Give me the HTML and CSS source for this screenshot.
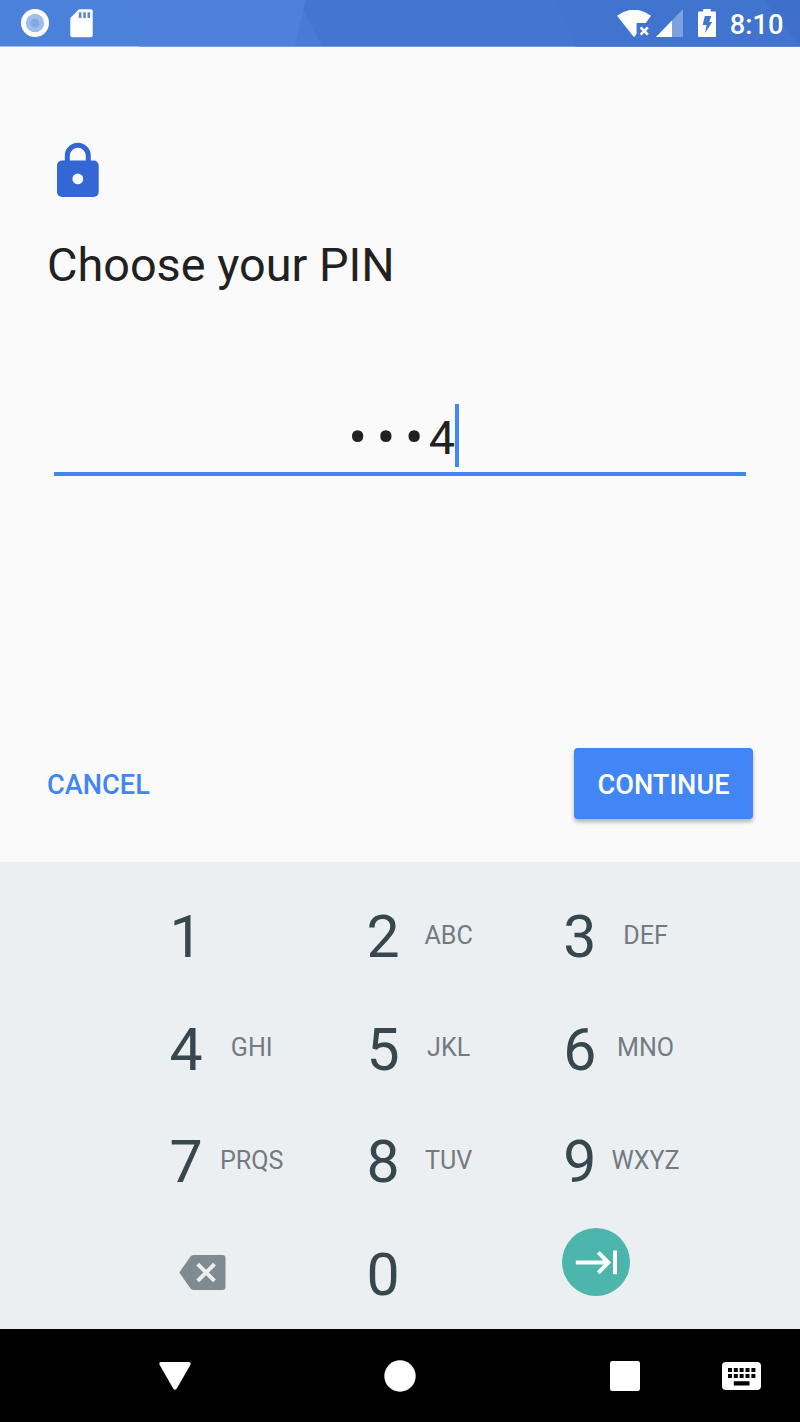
FILE: index.html
```html
<!DOCTYPE html>
<html lang="en">
<head>
<meta charset="utf-8">
<title>Choose your PIN</title>
<link rel="stylesheet" href="styles.css">
</head>
<body>
<div class="screen">
  <header class="status">
    <svg class="status-bg" viewBox="0 0 800 47" preserveAspectRatio="none" aria-hidden="true">
      <path fill="#4b80db" d="M0 0H800V47H0z"/>
      <path fill="#4d81dc" d="M124 0H306L295 47H139z"/>
      <path fill="#4276d0" d="M306 0H800V47H322L303 10z"/>
      <path fill="#487bd6" d="M303 10L322 47H295z"/>
      <path fill="#4074cf" d="M555 0H765L800 47H576z"/>
      <path fill="#3d70ca" d="M765 0H800V47z"/>
    </svg>
    <div class="status-left">
      <svg width="28" height="28" viewBox="0 0 28 28"><circle cx="14" cy="14" r="14" fill="#fff"/><circle cx="14" cy="14" r="9.2" fill="#a0bdec"/><circle cx="14" cy="14" r="4.6" fill="#83a8e4"/></svg>
      <svg width="23" height="29" viewBox="0 0 23 29"><path fill="#fff" d="M9 .3H20.700Q22.700.3 22.700 2.300V26.300Q22.700 28.300 20.700 28.300H2.300Q.3 28.300.3 26.300V9z"/><path fill="#5f87ce" d="M8.800 3.300h2.600v5.600H8.800zM13.200 3.300h2.600v5.600h-2.600zM17.500 3.300h2.600v5.600h-2.600z"/></svg>
    </div>
    <div class="status-right">
      <svg class="wifi" width="34" height="29" viewBox="0 0 34 29"><path fill="#fff" d="M0 5.800Q17-6.600 34 5.800L28.800 12.900H19.600V24L17 27.300z"/><path fill="none" stroke="#fff" stroke-width="2.600" d="M23.600 17.300l7.300 7.400M30.900 17.300l-7.300 7.400"/></svg>
      <svg class="signal" width="27" height="28" viewBox="0 0 27 28"><path fill="#7da1df" d="M27 0V28H0z"/><path fill="#fff" d="M16 11.600V28H0z"/></svg>
      <svg class="battery" width="18" height="29" viewBox="0 0 18 29"><path fill="#fff" d="M5.300 0h7.400v2.500H17q1 0 1 1v23.500q0 1-1 1H1q-1 0-1-1V3.500q0-1 1-1h4.300z"/><path fill="#4276d0" d="M6.800 7h6.500l-2.100 6h3L6.900 24.300l1.700-8.200H4.700z"/></svg>
      <span class="clock">8:10</span>
    </div>
  </header>

  <main class="setup">
    <svg class="lock" width="42" height="55" viewBox="0 0 42 55"><rect y="18.500" width="41.700" height="36.500" rx="5" fill="#3367d6"/><path d="M10.300 19.500V13.800a10.500 10.500 0 0 1 21 0V19.500" fill="none" stroke="#3367d6" stroke-width="5"/><circle cx="20.800" cy="36.900" r="5.400" fill="#fafafa"/></svg>
    <h1 class="title">Choose your PIN</h1>
    <div class="pin-field">
      <span class="dot">•</span><span class="dot">•</span><span class="dot">•</span><span class="digit-shown">4</span><span class="caret"></span>
    </div>
    <div class="actions">
      <button class="cancel">CANCEL</button>
      <button class="continue">CONTINUE</button>
    </div>
  </main>

  <section class="keypad">
    <div class="key"><b>1</b></div>
    <div class="key"><b>2</b><span>ABC</span></div>
    <div class="key"><b>3</b><span>DEF</span></div>
    <div class="key"><b>4</b><span>GHI</span></div>
    <div class="key"><b>5</b><span>JKL</span></div>
    <div class="key"><b>6</b><span>MNO</span></div>
    <div class="key"><b>7</b><span>PRQS</span></div>
    <div class="key"><b>8</b><span>TUV</span></div>
    <div class="key"><b>9</b><span>WXYZ</span></div>
    <div class="key key-delete"><svg width="47" height="35" viewBox="0 0 47 35"><path fill="#808b91" d="M14.500 0H43.500Q46.500 0 46.500 3V32Q46.500 35 43.500 35H14.500Q12.500 35 11.300 33.200L.3 17.500 11.300 1.800Q12.500 0 14.500 0z"/><path fill="none" stroke="#eceff1" stroke-width="3.900" d="M18.700 9.100l16.800 16.800M35.500 9.100L18.700 25.900"/></svg></div>
    <div class="key"><b>0</b></div>
    <div class="key key-next"><svg width="68" height="68" viewBox="0 0 68 68"><circle cx="34" cy="34" r="34" fill="#4db6ac"/><path fill="none" stroke="#fff" stroke-width="4" d="M13.800 34.500H46.500M36.300 24.300L46.300 34.500 36.300 44.800M53 22.500V46.300"/></svg></div>
  </section>

  <nav class="navbar">
    <svg class="nav-back" width="32" height="28" viewBox="0 0 32 28"><path fill="#fff" d="M2 0H30Q32.500.5 31.300 3L17.800 26.600Q16 29 14.200 26.600L.7 3Q-.5.5 2 0z"/></svg>
    <svg class="nav-home" width="32" height="32" viewBox="0 0 32 32"><circle cx="16" cy="16" r="15.700" fill="#fff"/></svg>
    <svg class="nav-recent" width="30" height="30" viewBox="0 0 30 30"><rect width="30" height="30" rx="2.300" fill="#fff"/></svg>
    <svg class="nav-keys" width="39" height="28" viewBox="0 0 39 28"><rect width="39" height="28" rx="4" fill="#fff"/><path fill="#000" d="M6 6h4v4H6zM11.800 6h4v4h-4zM17.600 6h4v4h-4zM23.500 6h4v4h-4zM29.400 6h4v4h-4zM6 12h4v4H6zM11.800 12h4v4h-4zM17.600 12h4v4h-4zM23.500 12h4v4h-4zM29.400 12h4v4h-4zM11.800 19.300h15.700v4.200H11.800z"/></svg>
  </nav>
</div>
</body>
</html>
```
FILE: styles.css
```css
* { box-sizing: border-box; }
body { margin: 0; font-family: Roboto, sans-serif; background: #fafafa; }
svg { display: block; flex: none; }
.screen { width: 800px; height: 1422px; display: flex; flex-direction: column; overflow: hidden; }

.status { position: relative; height: 46.5px; flex: none; display: flex; justify-content: space-between; }
.status-bg { position: absolute; inset: 0; width: 100%; height: 100%; }
.status-left, .status-right { position: relative; display: flex; align-items: flex-start; }
.status-left { padding: 9px 0 0 21px; gap: 21px; }
.status-right { padding: 9px 16.500px 0 0; }
.wifi { margin-right: 5px; margin-top: 1px; }
.signal { margin-right: 15px; }
.battery { margin-right: 14px; }
.clock { color: #fff; font-size: 27.3px; font-weight: 500; line-height: 32px; }

.setup { height: 815.5px; flex: none; display: flex; flex-direction: column; padding: 95.500px 47px 0; background: #fafafa; }
.lock { margin-left: 10px; }
.title { margin: 37.500px 0 0; font-size: 46.8px; font-weight: 400; line-height: 60px; color: #212121; }
.pin-field { margin: 109px 7px 0; height: 72px; padding-left: 3px; border-bottom: 4px solid #4285f4; display: flex; justify-content: center; font-size: 46.8px; line-height: 68px; color: #212121; }
.dot { width: 28.2px; text-align: center; font-size: 56px; line-height: 69px; display: flex; justify-content: center; }
.digit-shown { width: 27px; text-align: center; }
.caret { width: 4px; height: 63px; margin-top: 0.5px; background: #4285f4; }
.actions { display: flex; justify-content: space-between; margin-top: 272px; height: 71px; }
.actions button { border: 0; font: 500 27.2px/71px Roboto, sans-serif; padding: 2px 0 0; }
.cancel { background: none; color: #4285f4; }
.continue { width: 179px; border-radius: 4px; background: #4285f4; color: #fff; box-shadow: 0 3px 4px rgba(0, 0, 0, .28); }

.keypad { height: 467px; flex: none; background: #eceff1; padding: 18.500px 0 0 169.500px; display: grid; grid-template-columns: repeat(3, 196.900px); grid-template-rows: repeat(4, 112.500px); overflow: hidden; }
.key { display: flex; align-items: center; }
.key b { width: 33px; font-size: 59px; font-weight: 400; color: #37474f; text-align: center; }
.key span { width: 98.5px; font-size: 25.1px; color: #737b81; text-align: center; position: relative; top: -1.5px; }
.key-delete { padding: 0 0 4px 9px; }
.key-next { padding-bottom: 24px; margin-left: -1px; }

.navbar { flex: 1; background: #000; display: flex; align-items: center; padding: 0 0 0 159px; }
.nav-home { margin-left: 193px; }
.nav-recent { margin-left: 194px; }
.nav-keys { margin-left: 82px; }
```
